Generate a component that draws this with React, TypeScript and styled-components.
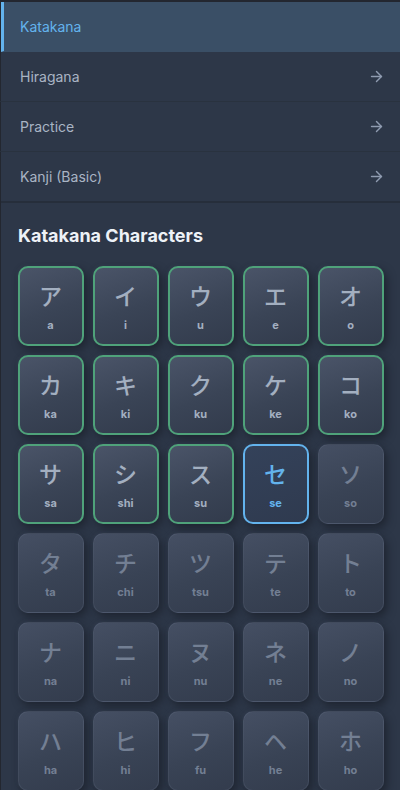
import React from "react";
import styled, { createGlobalStyle, css } from "styled-components";
import { ArrowRight } from "lucide-react";

const GlobalStyle = createGlobalStyle`
    html, body {
        margin: 0;
        padding: 0;
        background: #232730;
    }
    body {
        font-family: Inter, "Noto Sans", "Noto Sans CJK JP", sans-serif;
        -webkit-font-smoothing: antialiased;
    }
`;

const Sidebar = styled.div`
    margin-top: 2px;
    margin-left: 1px;
    background: #2d3748;
    min-height: 788px;
`;

const Menu = styled.nav`
    display: flex;
    flex-direction: column;
    border-bottom: 2px solid #262e3b;
`;

const MenuItem = styled.div<{ active?: boolean }>`
    display: flex;
    align-items: center;
    justify-content: space-between;
    height: 49px;
    padding: 0 15px 0 19px;
    border-bottom: 1px solid #29323f;
    font-size: 14px;
    color: #a9b4c4;
    border-left: 3px solid transparent;
    margin-left: -3px;
    ${(props) =>
        props.active &&
        css`
            background: #3a4f66;
            color: #63b3ed;
            border-left: 3px solid #63b3ed;
            margin-left: 0;
            padding-left: 16px;
            border-bottom-color: #3a4f66;
        `}
    &:last-child {
        border-bottom: none;
    }
`;

const Section = styled.section`
    padding: 22px 16px 0 16px;
`;

const Heading = styled.h3`
    margin: 0 0 19px 1px;
    font-size: 18px;
    font-weight: 700;
    color: #edf2f7;
    line-height: 22px;
`;

const Grid = styled.div`
    display: grid;
    grid-template-columns: repeat(5, 66px);
    grid-auto-rows: 80px;
    column-gap: 9px;
    row-gap: 9px;
    padding-left: 0.5px;
`;

type CardState = "learned" | "current" | "locked";

const Card = styled.div<{ state: CardState }>`
    box-sizing: border-box;
    display: flex;
    flex-direction: column;
    align-items: center;
    border-radius: 10px;
    background: linear-gradient(160deg, #4a5468 0%, #3a4456 55%, #323b4c 100%);
    box-shadow: 3px 4px 8px rgba(18, 22, 30, 0.55), -1px -1px 3px rgba(80, 92, 112, 0.15);
    border: 2px solid transparent;
    padding-top: 12px;
    color: #a3afc0;
    ${(props) =>
        props.state === "learned" &&
        css`
            border-color: #4fa27a;
        `}
    ${(props) =>
        props.state === "current" &&
        css`
            border-color: #63b3ed;
            background: linear-gradient(160deg, #34425a 0%, #2f3a4f 100%);
            color: #63b3ed;
        `}
    ${(props) =>
        props.state === "locked" &&
        css`
            border: 1px solid rgba(120, 134, 156, 0.18);
            padding-top: 13px;
            background: linear-gradient(160deg, #454f63 0%, #394355 55%, #333c4d 100%);
            color: #737f93;
        `}
`;

const Kana = styled.span`
    font-family: "Noto Sans CJK JP", sans-serif;
    font-size: 23px;
    line-height: 30px;
    font-weight: 500;
`;

const Romaji = styled.span`
    margin-top: 8px;
    font-size: 11px;
    font-weight: 700;
    line-height: 14px;
`;

const menu = [
    { label: "Katakana", active: true },
    { label: "Hiragana" },
    { label: "Practice" },
    { label: "Kanji (Basic)" },
];

const kana: [string, string][] = [
    ["ア", "a"], ["イ", "i"], ["ウ", "u"], ["エ", "e"], ["オ", "o"],
    ["カ", "ka"], ["キ", "ki"], ["ク", "ku"], ["ケ", "ke"], ["コ", "ko"],
    ["サ", "sa"], ["シ", "shi"], ["ス", "su"], ["セ", "se"], ["ソ", "so"],
    ["タ", "ta"], ["チ", "chi"], ["ツ", "tsu"], ["テ", "te"], ["ト", "to"],
    ["ナ", "na"], ["ニ", "ni"], ["ヌ", "nu"], ["ネ", "ne"], ["ノ", "no"],
    ["ハ", "ha"], ["ヒ", "hi"], ["フ", "fu"], ["ヘ", "he"], ["ホ", "ho"],
];

function App() {
    return (
        <>
            <GlobalStyle />
            <Sidebar>
                <Menu>
                    {menu.map((item) => (
                        <MenuItem key={item.label} active={item.active}>
                            <span>{item.label}</span>
                            {!item.active && <ArrowRight size={17} strokeWidth={2} color="#8f9bb0" />}
                        </MenuItem>
                    ))}
                </Menu>
                <Section>
                    <Heading>Katakana Characters</Heading>
                    <Grid>
                        {kana.map(([ch, ro], i) => {
                            const state: CardState = i < 13 ? "learned" : i === 13 ? "current" : "locked";
                            return (
                                <Card key={ro} state={state}>
                                    <Kana>{ch}</Kana>
                                    <Romaji>{ro}</Romaji>
                                </Card>
                            );
                        })}
                    </Grid>
                </Section>
            </Sidebar>
        </>
    );
}

export default App;
